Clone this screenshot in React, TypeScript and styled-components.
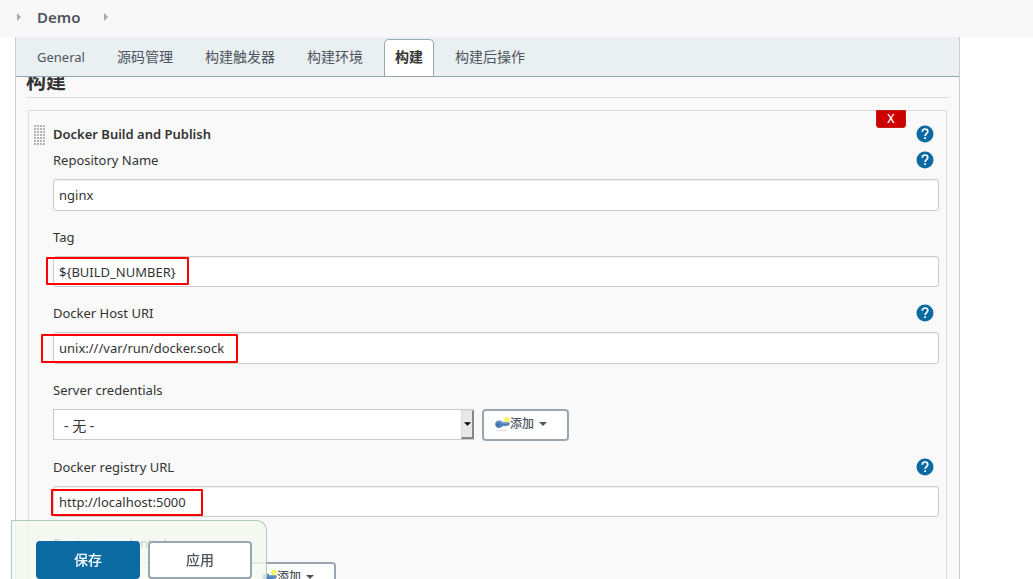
import React from "react";
import styled, { createGlobalStyle } from "styled-components";

const GlobalStyle = createGlobalStyle`
  *, *::before, *::after { box-sizing: border-box; }
  body {
    margin: 0;
    background: #fff;
    color: #333;
    font-family: "Noto Sans", "Noto Sans CJK SC", sans-serif;
    font-size: 13px;
    line-height: 20px;
  }
  button, input, select { font: inherit; color: inherit; margin: 0; }
`;

const Page = styled.div`
  display: flex;
  flex-direction: column;
  height: 100vh;
  overflow: hidden;
`;

const Breadcrumbs = styled.nav`
  display: flex;
  flex: none;
  align-items: center;
  height: 37px;
  padding: 0 16px 4px;
  gap: 16px;
  background: #f8f8f8;
`;

const Crumb = styled.a`
  margin-right: 7px;
  color: #4d545d;
  font-size: 15px;
  font-weight: 600;
  text-decoration: none;
`;

const Panel = styled.main`
  display: flex;
  flex: 1;
  flex-direction: column;
  min-height: 0;
  margin: 0 73px 0 15px;
  border: solid #ccc;
  border-width: 0 1px;
  background: #f9f9f9;
`;

const TabBar = styled.div`
  display: flex;
  flex: none;
  align-items: flex-end;
  height: 40px;
  padding-left: 10px;
  gap: 10px;
  border-bottom: 1px solid #93a6ae;
  background: #eaeff2;
`;

const Tab = styled.button<{ $active?: boolean }>`
  height: 37px;
  padding: 0 10px 2px;
  border: 1px solid ${(p) => (p.$active ? "#98a8b0" : "transparent")};
  border-bottom: 0;
  border-radius: 5px 5px 0 0;
  background: ${(p) => (p.$active ? "#fff" : "transparent")};
  color: ${(p) => (p.$active ? "#333" : "#4d545d")};
  font-size: 14px;
  font-weight: ${(p) => (p.$active ? 700 : 400)};
  white-space: nowrap;

  &:lang(en) { font-size: 13px; }
`;

const Scroll = styled.div`
  flex: 1;
  min-height: 0;
  overflow: hidden;
`;

const SectionTitle = styled.h2`
  margin: -10px 10px 12px;
  padding-bottom: 1px;
  border-bottom: 1px solid #ddd;
  font-size: 20px;
  font-weight: 700;
  line-height: 29px;
`;

const Step = styled.section`
  position: relative;
  margin: 0 12px;
  padding: 10px 7px 20px 24px;
  border: 1px solid #ddd;
`;

const Grip = styled.span`
  position: absolute;
  top: 14px;
  left: 5px;
  width: 12px;
  height: 21px;
  background: radial-gradient(circle at 1px 1px, #b4b4b4 1px, transparent 1px) 0 0 / 3px 3px;
`;

const DeleteButton = styled.button`
  position: absolute;
  top: -1px;
  right: 40px;
  width: 30px;
  height: 18px;
  padding: 0;
  border: 1px solid #c41e10;
  border-radius: 0 0 3px 3px;
  background: #c00;
  color: #fff;
  font-size: 12px;
  font-weight: 500;
  line-height: 16px;
`;

const Row = styled.div`
  display: flex;
  align-items: center;
  justify-content: space-between;
  height: 26px;
  padding-right: 5px;
`;

const StepTitle = styled.h3`
  margin: 0;
  font-size: 13px;
  font-weight: 600;
`;

const Field = styled.div`
  margin-bottom: 13px;
`;

const Control = styled.div`
  position: relative;
  display: flex;
  margin-top: 6px;
  gap: 8px;
`;

const TextInput = styled.input<{ $compact?: boolean }>`
  flex: 1;
  min-width: 0;
  height: ${(p) => (p.$compact ? 31 : 32)}px;
  padding: 0 5px;
  border: 1px solid #ccc;
  border-radius: 3px;
  background: #fff;
  box-shadow: inset 0 1px 1px rgba(0, 0, 0, 0.07);
`;

type Box = { top: number; left: number; width: number; height: number };

const Mark = styled.span<{ $box: Box }>`
  position: absolute;
  top: ${(p) => p.$box.top}px;
  left: ${(p) => p.$box.left}px;
  width: ${(p) => p.$box.width}px;
  height: ${(p) => p.$box.height}px;
  border: 2px solid #f00;
  border-radius: 1px;
  pointer-events: none;
`;

const SelectBox = styled.div<{ $width: number }>`
  position: relative;
  flex: 0 1 ${(p) => p.$width}px;
  height: 31px;
`;

const Select = styled.select`
  width: 100%;
  height: 31px;
  padding: 3px 16px 0 10px;
  appearance: none;
  border: 1px solid #ccc;
  border-radius: 0;
  background: #fff;
  font-size: 14px;
`;

const SelectArrow = styled.span`
  position: absolute;
  top: 1px;
  right: 0;
  display: grid;
  place-items: center;
  width: 13px;
  height: 29px;
  border: solid;
  border-width: 1px 2px 2px 1px;
  border-color: #ddd #888 #888 #ddd;
  background: #e8e8e7;
  color: #000;
  pointer-events: none;
`;

const AddButton = styled.button`
  display: flex;
  align-items: center;
  width: 87px;
  height: 32px;
  padding: 0 11px 2px;
  border: 2px solid #98a6b1;
  border-radius: 4px;
  background: #fff;
  color: #4d545d;
  font-size: 12px;
  font-weight: 500;
  white-space: nowrap;

  svg:last-child { margin-left: 5px; }
`;

const HelpLink = styled.a`
  display: block;
  height: 18px;
`;

const ActionBar = styled.div`
  position: fixed;
  bottom: 0;
  left: 11px;
  display: flex;
  padding: 20px 14px 0 24px;
  gap: 8px;
  border: 1px solid #a9cdb9;
  border-bottom: 0;
  border-radius: 0 10px 0 0;
  background: rgba(245, 249, 239, 0.8);
`;

const ActionButton = styled.button<{ $primary?: boolean }>`
  width: 104px;
  height: 38px;
  padding: 0;
  border: 2px solid ${(p) => (p.$primary ? "#0b6aa2" : "#98a6b1")};
  border-radius: 4px;
  background: ${(p) => (p.$primary ? "#0b6aa2" : "#fff")};
  color: ${(p) => (p.$primary ? "#fff" : "#4d545d")};
  font-size: 14px;
  font-weight: 500;
`;

const CrumbArrow = () => (
  <svg width="5" height="8" viewBox="0 0 5 8" aria-hidden="true">
    <path d="M1 0 5 4 1 8Z" fill="#aaa" />
  </svg>
);

const Caret = ({ width = 8 }: { width?: number }) => (
  <svg width={width} height="4" viewBox="0 0 8 4" aria-hidden="true">
    <path d="M0 0h8L4 4Z" fill="currentColor" />
  </svg>
);

const KeyIcon = () => (
  <svg width="15" height="16" viewBox="0 0 15 16" aria-hidden="true">
    <ellipse cx="7" cy="14.5" rx="5.5" ry="0.8" fill="#ddd" />
    <path d="M4 4.6c1.800 0 2.900.6 3.500 1.700H14c.7 0 .9.7.7 1.400L14 9.500h-2l-.6 1-1-.8-1 .6-1.400-.5C7.200 11 5.800 12 4 12 1.600 12 .2 10.500.2 8.300S1.600 4.600 4 4.600Z" fill="#4d80be" />
    <path d="M1.500 6.200c1.500-1 4-.9 5 .8H14" fill="none" stroke="#7da4d4" strokeWidth="1" />
    <circle cx="2.800" cy="8.500" r="1" fill="#32649f" />
    <circle cx="11.800" cy="3.500" r="1.800" fill="#fffce0" stroke="#fbf040" strokeWidth="1.700" />
  </svg>
);

const Help = ({ topic }: { topic: string }) => (
  <HelpLink href="#help" aria-label={`Help: ${topic}`}>
    <svg width="18" height="18" viewBox="0 0 18 18">
      <circle cx="9" cy="9" r="8.500" fill="#0b6aa2" />
      <path d="M6.300 6.800C6.300 5 7.400 4 9 4s2.800 1 2.800 2.500c0 1.900-2.700 2.200-2.700 4.400" fill="none" stroke="#fff" strokeWidth="1.700" />
      <path d="M8.200 12.300h1.800v1.800H8.200z" fill="#fff" />
    </svg>
  </HelpLink>
);

type TextFieldProps = { id: string; label: string; value: string; help?: boolean; compact?: boolean; mark?: Box };

const TextField = ({ id, label, value, help, compact, mark }: TextFieldProps) => (
  <Field>
    <Row>
      <label htmlFor={id}>{label}</label>
      {help && <Help topic={label} />}
    </Row>
    <Control>
      <TextInput id={id} type="text" defaultValue={value} spellCheck={false} $compact={compact} />
      {mark && <Mark $box={mark} />}
    </Control>
  </Field>
);

const CredentialsField = ({ id, label, width }: { id: string; label: string; width: number }) => (
  <Field>
    <Row>
      <label htmlFor={id}>{label}</label>
    </Row>
    <Control>
      <SelectBox $width={width}>
        <Select id={id}>
          <option>- 无 -</option>
        </Select>
        <SelectArrow>
          <Caret width={7} />
        </SelectArrow>
      </SelectBox>
      <AddButton type="button">
        <KeyIcon />
        添加
        <Caret />
      </AddButton>
    </Control>
  </Field>
);

const tabs = [
  { name: "General", lang: "en" },
  { name: "源码管理" },
  { name: "构建触发器" },
  { name: "构建环境" },
  { name: "构建", active: true },
  { name: "构建后操作" },
];

export default function App() {
  return (
    <>
      <GlobalStyle />
      <Page>
        <Breadcrumbs>
          <CrumbArrow />
          <Crumb href="#demo">Demo</Crumb>
          <CrumbArrow />
        </Breadcrumbs>
        <Panel>
          <TabBar role="tablist">
            {tabs.map(({ name, lang, active }) => (
              <Tab key={name} type="button" role="tab" lang={lang} aria-selected={!!active} $active={active}>
                {name}
              </Tab>
            ))}
          </TabBar>
          <Scroll>
            <SectionTitle>构建</SectionTitle>
            <Step>
              <Grip />
              <DeleteButton type="button">X</DeleteButton>
              <Row>
                <StepTitle>Docker Build and Publish</StepTitle>
                <Help topic="Docker Build and Publish" />
              </Row>
              <TextField id="repo" label="Repository Name" value="nginx" help />
              <TextField
                id="tag"
                label="Tag"
                value="${BUILD_NUMBER}"
                compact
                mark={{ top: 1, left: -7, width: 143, height: 28 }}
              />
              <TextField
                id="host"
                label="Docker Host URI"
                value="unix:///var/run/docker.sock"
                help
                mark={{ top: 2, left: -12, width: 197, height: 29 }}
              />
              <CredentialsField id="server-credentials" label="Server credentials" width={421} />
              <TextField
                id="registry"
                label="Docker registry URL"
                value="http://localhost:5000"
                help
                compact
                mark={{ top: 3, left: -2, width: 152, height: 27 }}
              />
              <CredentialsField id="registry-credentials" label="Registry credentials" width={188} />
            </Step>
          </Scroll>
        </Panel>
        <ActionBar>
          <ActionButton type="submit" $primary>保存</ActionButton>
          <ActionButton type="button">应用</ActionButton>
        </ActionBar>
      </Page>
    </>
  );
}
